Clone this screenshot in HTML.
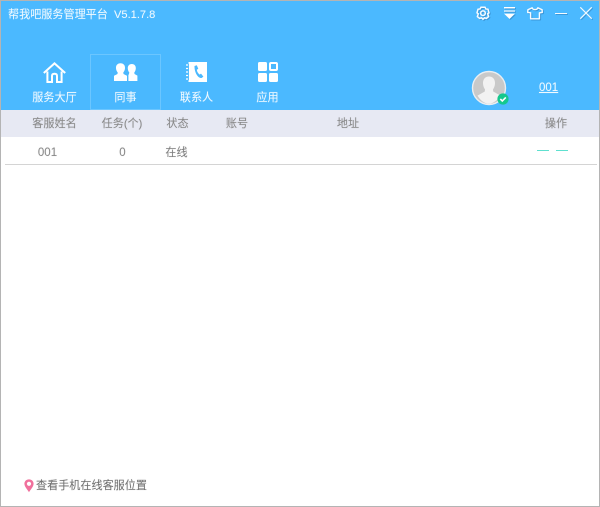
<!DOCTYPE html>
<html lang="zh">
<head>
<meta charset="utf-8">
<title>帮我吧服务管理平台</title>
<style>
html,body{margin:0;padding:0;background:#fff}
#app{position:relative;width:600px;height:507px;overflow:hidden;background:#fff;font-family:"Liberation Sans","Noto Sans CJK SC",sans-serif;font-size:11.1px;color:#777}
#frame{position:absolute;inset:0;border:1px solid #b4b4b4;box-sizing:border-box;z-index:5;pointer-events:none}
#head{position:absolute;left:0;top:0;width:600px;height:110px;background:#4bb9ff}
.t{position:absolute;white-space:nowrap;line-height:14px;text-shadow:0 0 1px rgba(130,130,130,.25)}
.w{color:#f2faff;text-shadow:0 0 1px rgba(255,255,255,.25)}
.c{transform:translateX(-50%)}
svg{position:absolute;overflow:visible}
.sh{filter:drop-shadow(1px 1px 0 rgba(40,110,170,.45))}
#active{position:absolute;left:90px;top:54px;width:71px;height:56px;box-sizing:border-box;border:1px solid #6bc6ff;background:#4ab8fe}
#thead{position:absolute;left:0;top:110px;width:600px;height:27px;background:#e7e9f3}
#line{position:absolute;left:5px;top:164px;width:592px;height:1px;background:#d4d4d4}
.dash{position:absolute;top:150px;width:12px;height:1px;background:#5fe0cf}
</style>
</head>
<body>
<div id="app">
<div id="frame"></div>
<div id="head"></div>

<div class="t w" style="left:8px;top:7.5px">帮我吧服务管理平台&nbsp; V5.1.7.8</div>

<svg class="sh" style="left:476px;top:6px" width="14" height="14" viewBox="0 0 14 14" fill="none" stroke="#f6fbff" stroke-width="1.5">
<path d="M5 1.2 L9 1.2 L9.9 3 L12 3.3 L13 6.8 L11.7 7.8 L12.6 10.6 L10.4 12.4 L8.5 11.8 L7 13.2 L5.5 11.8 L3.6 12.4 L1.4 10.6 L2.3 7.8 L1 6.8 L2 3.3 L4.1 3 Z"/>
<circle cx="7" cy="7.2" r="2.3"/>
</svg>

<svg class="sh" style="left:504px;top:7px" width="12" height="12" viewBox="0 0 12 12" fill="#fff">
<rect x="0" y="0" width="11" height="1.4"/>
<rect x="0" y="3.4" width="11" height="1.3" opacity=".9"/>
<path d="M0 6.6 H11 L5.5 12 Z"/>
</svg>

<svg class="sh" style="left:527px;top:7px" width="16" height="13" viewBox="0 0 16 13" fill="none" stroke="#f6fbff" stroke-width="1.4" stroke-linejoin="round">
<path d="M5.2 .8 L.9 2.8 L.7 5.4 L3.6 5.8 L3.6 11.8 L12.4 11.8 L12.4 5.8 L15.3 5.4 L15.1 2.8 L10.8 .8 C10 3.2 6 3.2 5.2 .8 Z"/>
</svg>

<div class="sh" style="position:absolute;left:555px;top:13px;width:12px;height:1.4px;background:#f6fbff"></div>

<svg class="sh" style="left:580px;top:7px" width="12" height="12" viewBox="0 0 12 12" stroke="#f0f9ff" stroke-width="1.2" fill="none">
<path d="M.3 .3 L11.7 11.7 M11.7 .3 L.3 11.7"/>
</svg>

<div id="active"></div>

<svg style="left:43px;top:62px" width="23" height="21" viewBox="0 0 23 21" fill="none" stroke="#fff" stroke-width="2">
<path d="M.8 11 L11.5 1.4 L22.2 11"/>
<path d="M4.4 9.5 V20 H9 V14 Q9 11.8 11.5 11.8 Q14 11.8 14 14 V20 H18.6 V9.5"/>
</svg>

<svg style="left:114px;top:63px" width="24" height="18" viewBox="0 0 24 18" fill="#fff">
<path d="M6.5 .2 C9.6 .2 11.2 2.4 11 5.2 C10.9 7 10.2 8.4 9.3 9.4 L9.5 11 L13 12.8 L13 18 L0 18 L0 12.8 L3.5 11 L3.7 9.4 C2.8 8.4 2.1 7 2 5.2 C1.8 2.4 3.4 .2 6.5 .2 Z"/>
<path d="M17.8 1 C20.6 1 22 3 21.8 5.6 C21.7 7.2 21 8.6 20.3 9.4 L20.5 11 L23.4 12.6 L23.4 18 L14.4 18 L14.4 12 L15 11 L15.3 9.4 C14.5 8.6 13.9 7.2 13.8 5.6 C13.6 3 15 1 17.8 1 Z"/>
</svg>

<svg style="left:186px;top:62px" width="22" height="20" viewBox="0 0 22 20">
<rect x="2.5" y="0" width="18.5" height="20" fill="#fff"/>
<path d="M0 3 H4.5 M0 6.5 H4.5 M0 10 H4.5 M0 13.5 H4.5 M0 17 H4.5" stroke="#fff" stroke-width="1.3"/>
<path d="M2.5 1.8 V18.2" stroke="#4bb9ff" stroke-width=".9"/>
<path d="M8.5 4 L10.8 3.2 L12.3 6.8 L10.8 7.8 C11 9.8 12.2 11.6 13.6 12.6 L15 11.6 L17.4 14.6 L15.6 16 C12.2 16.4 8.4 11 8.5 4 Z" fill="#4bb9ff"/>
</svg>

<svg style="left:258px;top:62px" width="20" height="20" viewBox="0 0 20 20" fill="#fff">
<rect x="0" y="0" width="9" height="9" rx="1.6"/>
<rect x="0" y="11" width="9" height="9" rx="1.6"/>
<rect x="11" y="11" width="9" height="9" rx="1.6"/>
<rect x="12" y="1" width="7" height="7" rx="1" fill="none" stroke="#fff" stroke-width="2"/>
</svg>

<div class="t w c" style="left:54.5px;top:91px">服务大厅</div>
<div class="t w c" style="left:125.5px;top:91px">同事</div>
<div class="t w c" style="left:196.5px;top:91px">联系人</div>
<div class="t w c" style="left:267.5px;top:91px">应用</div>

<svg style="left:472px;top:70px" width="38" height="36" viewBox="0 0 38 36">
<circle cx="17" cy="18" r="16.5" fill="#c9c9c9" stroke="#e9eef2" stroke-width="1.4"/>
<path d="M17 6.5 C21 6.5 23.2 9.5 23 13.5 C22.9 16 22 18 21 19.4 L21.2 21.5 L28.5 25.6 C25.5 30 21.5 33.6 17 33.6 C12.5 33.6 8.5 30.6 5.5 25.6 L12.8 21.5 L13 19.4 C12 18 11.1 16 11 13.5 C10.8 9.5 13 6.5 17 6.5 Z" fill="#f2f2f2"/>
<circle cx="31" cy="29" r="5.6" fill="#14c88e"/>
<path d="M28.3 29 L30.3 31 L33.8 27.4" fill="none" stroke="#fff" stroke-width="1.6"/>
</svg>

<div class="t w" style="left:539px;top:81px;font-size:11.5px;text-decoration:underline">001</div>

<div id="thead"></div>
<div class="t c" style="left:54.5px;top:117px;color:#888">客服姓名</div>
<div class="t c" style="left:122px;top:117px;color:#888">任务(个)</div>
<div class="t c" style="left:177.5px;top:117px;color:#888">状态</div>
<div class="t c" style="left:237px;top:117px;color:#888">账号</div>
<div class="t c" style="left:348px;top:117px;color:#888">地址</div>
<div class="t c" style="left:556px;top:117px;color:#888">操作</div>

<div class="t c" style="left:47.5px;top:146px;color:#888;font-size:11.5px">001</div>
<div class="t c" style="left:122.5px;top:146px;color:#888;font-size:11.5px">0</div>
<div class="t c" style="left:176.5px;top:146px;color:#7d7d7d">在线</div>
<div class="dash" style="left:537px"></div>
<div class="dash" style="left:556px"></div>
<div id="line"></div>

<svg style="left:24px;top:479px" width="10" height="14" viewBox="0 0 10 14">
<path d="M5 .4 C7.8 .4 9.6 2.4 9.6 4.8 C9.6 7.6 6.6 10.6 5 13.2 C3.4 10.6 .4 7.6 .4 4.8 C.4 2.4 2.2 .4 5 .4 Z" fill="#f0709c"/>
<circle cx="5" cy="4.8" r="2.1" fill="#fff"/>
</svg>
<div class="t" style="left:36px;top:479px;color:#6f6f6f">查看手机在线客服位置</div>
</div>
</body>
</html>
